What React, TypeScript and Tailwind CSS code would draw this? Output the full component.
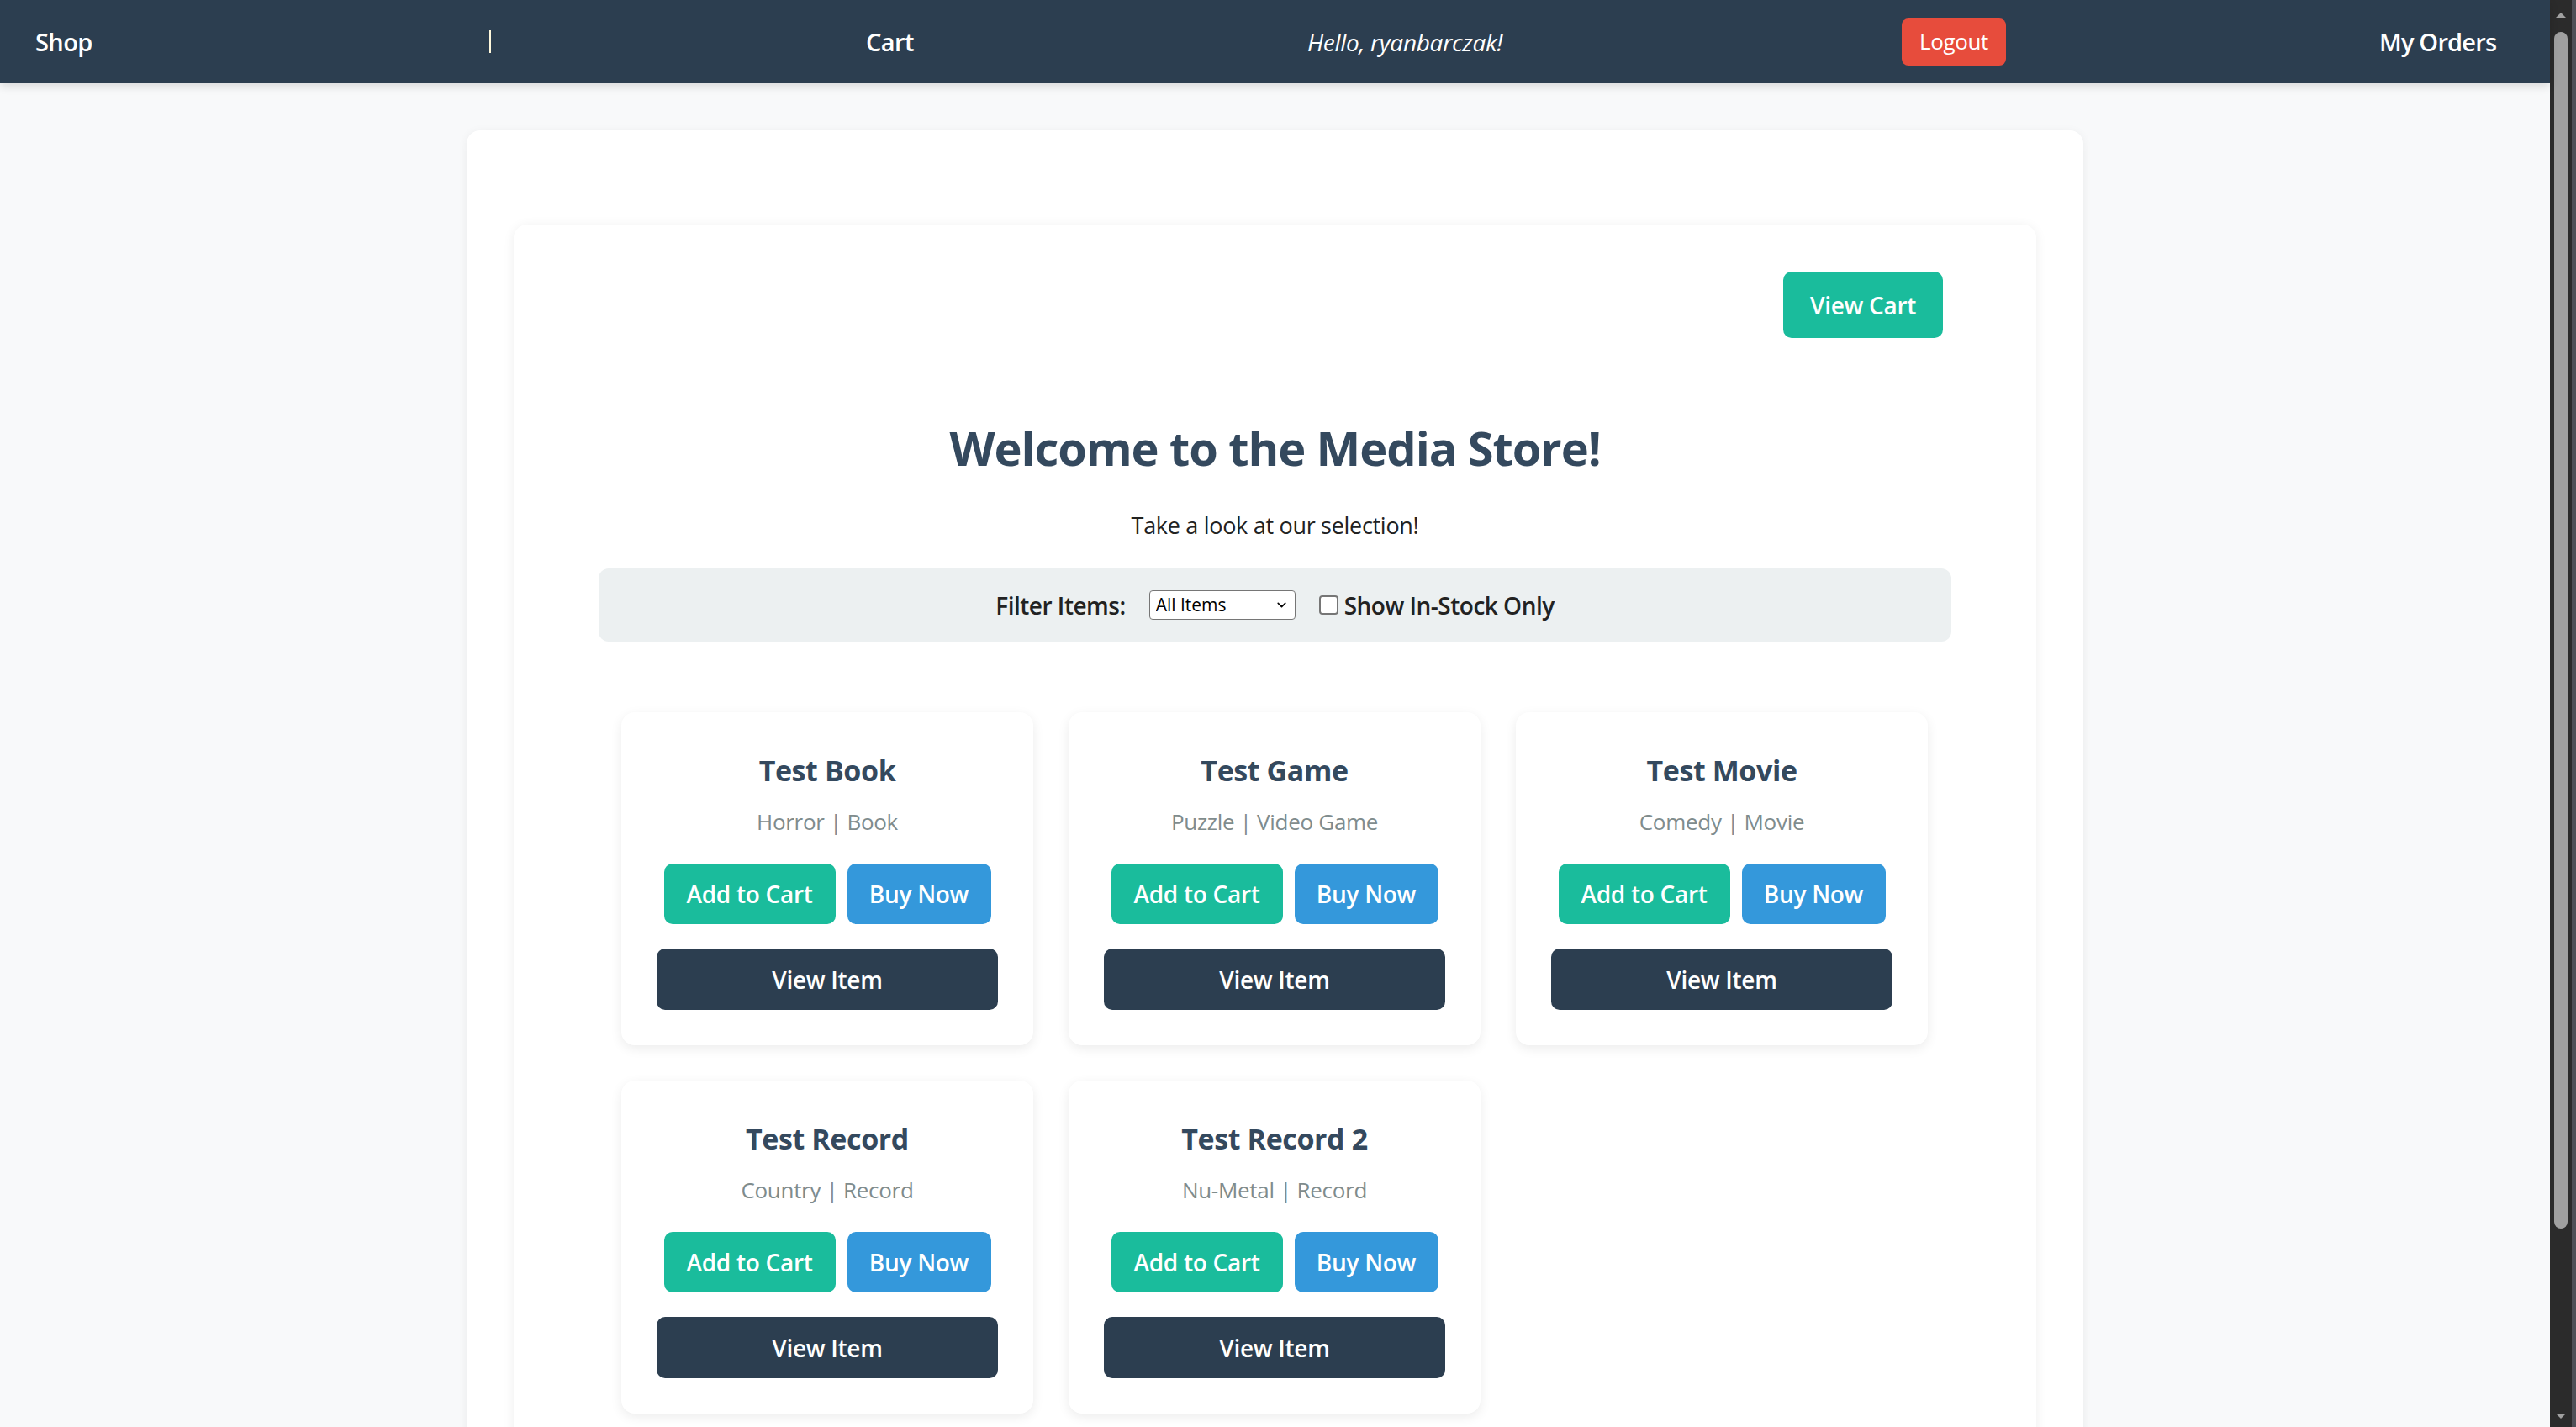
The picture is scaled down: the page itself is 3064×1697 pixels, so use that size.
import { ChevronDown } from "lucide-react";

const items = [
  { name: "Test Book", genre: "Horror", type: "Book" },
  { name: "Test Game", genre: "Puzzle", type: "Video Game" },
  { name: "Test Movie", genre: "Comedy", type: "Movie" },
  { name: "Test Record", genre: "Country", type: "Record" },
  { name: "Test Record 2", genre: "Nu-Metal", type: "Record" },
];

const Navbar = () => (
  <nav className="h-[99px] shrink-0 bg-[#2c3e50] grid grid-cols-[540px_448px_525px_707px_568px_auto] items-center pl-[42px] shadow-[0_4px_10px_rgba(0,0,0,0.12)] relative z-10">
    <a className="text-white text-[29px] font-semibold tracking-[-0.6px]">Shop</a>
    <span className="w-[2px] h-[27px] bg-[#fff8dc]" />
    <a className="text-white text-[29px] font-semibold tracking-[-0.6px]">Cart</a>
    <span className="text-white text-[28px] italic tracking-[-0.3px]">Hello, ryanbarczak!</span>
    <button className="w-[124px] h-[56px] rounded-[8px] bg-[#e74c3c] text-white text-[26px] tracking-[-0.4px]">Logout</button>
    <a className="text-white text-[29px] font-semibold tracking-[-0.8px]">My Orders</a>
  </nav>
);

const ItemCard = ({ name, genre, type }: { name: string; genre: string; type: string }) => (
  <div className="w-[490px] h-[396px] bg-white rounded-[16px] shadow-[0_4px_14px_rgba(0,0,0,0.08)] flex flex-col items-center pt-[49px]">
    <h3 className="text-[34px] leading-[40px] font-bold text-[#34495e] tracking-[-0.4px]">{name}</h3>
    <p className="mt-[21px] text-[26px] leading-[40px] text-[#7f8c8d] tracking-[-0.3px]">
      {genre} | {type}
    </p>
    <div className="mt-[30px] flex gap-[14px]">
      <button className="w-[204px] h-[72px] rounded-[10px] bg-[#1abc9c] text-white text-[28px] font-semibold tracking-[-0.3px]">Add to Cart</button>
      <button className="w-[171px] h-[72px] rounded-[10px] bg-[#3498db] text-white text-[28px] font-semibold tracking-[-0.3px]">Buy Now</button>
    </div>
    <button className="mt-[29px] w-[406px] h-[73px] rounded-[10px] bg-[#2c3e50] text-white text-[28px] font-semibold tracking-[-0.3px]">View Item</button>
  </div>
);

const Scrollbar = () => (
  <div className="flex shrink-0 h-full">
    <div className="w-[26px] h-full bg-[#2b2b2b] flex flex-col items-center">
      <svg width="14" height="10" viewBox="0 0 14 10" className="mt-[13px]">
        <path d="M1 8 L7 2 L13 8 Z" fill="#a0a0a0" />
      </svg>
      <div className="mt-[15px] w-[16px] h-[1423px] rounded-full bg-[#a0a0a0]" />
      <div className="flex-1" />
      <svg width="14" height="10" viewBox="0 0 14 10" className="mb-[8px]">
        <path d="M1 2 L7 8 L13 2 Z" fill="#a0a0a0" />
      </svg>
    </div>
    <div className="w-[5px] h-full bg-[#4f5057]" />
  </div>
);

const App = () => {
  return (
    <div className="h-[1697px] w-full flex overflow-hidden bg-[#f8f9fa] font-['Open_Sans',sans-serif]">
      <div className="flex-1 flex flex-col min-w-0">
        <Navbar />
        <main className="flex justify-center pt-[56px]">
          <div className="w-[1923px] min-h-[1700px] bg-white rounded-[16px] shadow-[0_2px_12px_rgba(0,0,0,0.06)] pt-[112px] px-[56px]">
            <div className="min-h-[1500px] bg-white rounded-[16px] shadow-[0_2px_14px_rgba(0,0,0,0.07)] pt-[56px] px-[101px]">
              <div className="flex justify-end pr-[10px]">
                <button className="w-[190px] h-[79px] rounded-[10px] bg-[#1abc9c] text-white text-[28px] font-semibold tracking-[-0.3px]">View Cart</button>
              </div>

              <h1 className="mt-[95px] text-center text-[56px] leading-[70px] font-bold text-[#34495e] tracking-[-1.1px]">Welcome to the Media Store!</h1>
              <p className="mt-[37px] text-center text-[27px] leading-[42px] text-[#222] tracking-[-0.3px]">Take a look at our selection!</p>

              <div className="mt-[30px] h-[87px] rounded-[12px] bg-[#ecf0f1] flex items-center justify-center">
                <label className="text-[28px] font-semibold text-[#222] tracking-[-0.5px]">Filter Items:</label>
                <div className="relative ml-[28px]">
                  <select className="appearance-none w-[174px] h-[35px] border border-[#767676] rounded-[4px] bg-white pl-[7px] text-[21px] text-black">
                    <option>All Items</option>
                  </select>
                  <ChevronDown className="absolute right-[8px] top-[9px] w-[17px] h-[17px] text-black pointer-events-none" strokeWidth={2.2} />
                </div>
                <input type="checkbox" className="appearance-none ml-[28px] w-[23px] h-[23px] border-2 border-[#767676] rounded-[4px] bg-white" />
                <label className="ml-[7px] text-[28px] font-semibold text-[#222] tracking-[-0.5px]">Show In-Stock Only</label>
              </div>

              <div className="mt-[84px] px-[27px] flex flex-wrap gap-[42px]">
                {items.map((item) => (
                  <ItemCard key={item.name} {...item} />
                ))}
              </div>
            </div>
          </div>
        </main>
      </div>
      <Scrollbar />
    </div>
  );
};

export default App;
